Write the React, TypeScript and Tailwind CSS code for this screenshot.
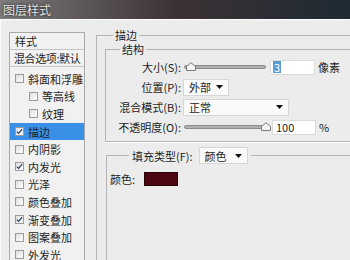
import React from 'react';

const font = { fontFamily: '"Noto Sans CJK SC", "Noto Sans", sans-serif' };

const items = [
  { label: '斜面和浮雕', checked: false, sub: false, active: false },
  { label: '等高线', checked: false, sub: true, active: false },
  { label: '纹理', checked: false, sub: true, active: false },
  { label: '描边', checked: true, sub: false, active: true },
  { label: '内阴影', checked: false, sub: false, active: false },
  { label: '内发光', checked: true, sub: false, active: false },
  { label: '光泽', checked: false, sub: false, active: false },
  { label: '颜色叠加', checked: false, sub: false, active: false },
  { label: '渐变叠加', checked: true, sub: false, active: false },
  { label: '图案叠加', checked: false, sub: false, active: false },
  { label: '外发光', checked: false, sub: false, active: false },
];

function Check({ checked }: { checked: boolean }) {
  return (
    <div className="w-[9px] h-[9px] border border-[#9a9a9a] bg-gradient-to-br from-[#dedede] to-white flex items-center justify-center shrink-0">
      {checked && (
        <svg width="7" height="7" viewBox="0 0 7 7">
          <path d="M0.8 3.6 L2.6 5.4 L6.2 1.2" fill="none" stroke="#2d3f66" strokeWidth="1.3" />
        </svg>
      )}
    </div>
  );
}

function Slider({ pos }: { pos: number }) {
  return (
    <div className="relative w-[82px] h-[20px] flex items-center">
      <div className="w-full h-[4px] bg-[#b0b0b0] border border-[#8c8c8c] rounded-[2px]" />
      <svg className="absolute top-[5px]" style={{ left: pos }} width="10" height="9" viewBox="0 0 10 9">
        <path d="M0.5 8.5 L0.5 4.5 L5 0.8 L9.5 4.5 L9.5 8.5 Z" fill="#f4f4f4" stroke="#7d7d7d" />
      </svg>
    </div>
  );
}

function Select({ text, w }: { text: string; w: string }) {
  return (
    <div className={`${w} h-[17px] bg-[#fafafa] border border-[#d6d6d6] flex items-center justify-between pl-[5px] pr-[5px]`}>
      <span>{text}</span>
      <svg width="7" height="4" viewBox="0 0 7 4">
        <path d="M0 0 L7 0 L3.5 4 Z" fill="#111" />
      </svg>
    </div>
  );
}

export default function App() {
  return (
    <div className="w-[350px] h-[260px] overflow-hidden bg-[#ececec] text-[11px] text-[#1e1e1e] leading-[14px]" style={font}>
      {/* Title bar */}
      <div className="h-[19px] bg-gradient-to-r from-[#7d7b7b] via-[#3c3236] to-[#1e2a33] flex items-center pl-[3px]">
        <span className="text-[12px] text-[#e6e6e6] [text-shadow:0_0_3px_#000]">图层样式</span>
      </div>

      <div className="flex h-[241px]">
        <div className="w-[2px] bg-[#a59d9d]" />
        <div className="flex-1 flex border-l border-t border-white">
          {/* Left list */}
          <div className="ml-[8px] mt-[12px] w-[76px] border border-[#a8a8a8] bg-[#f1f1f1] self-start">
            <div className="h-[17px] border-b border-[#c4c4c4] pl-[5px] flex items-center">样式</div>
            <div className="h-[17px] border-b border-[#c4c4c4] pl-[4px] flex items-center whitespace-nowrap tracking-[-0.4px]">混合选项:默认</div>
            <div className="pt-[3px]">
              {items.map((it) => (
                <div
                  key={it.label}
                  className={`h-[17.6px] flex items-center gap-[4px] ${it.sub ? 'pl-[19px]' : 'pl-[5px]'} ${it.active ? 'bg-[#3a8fe6]' : ''}`}
                >
                  <Check checked={it.checked} />
                  <span className="whitespace-nowrap">{it.label}</span>
                </div>
              ))}
            </div>
          </div>

          {/* Right panel */}
          <div className="ml-[11px] mt-[8px]">
            <fieldset className="w-[270px] h-[240px] border-l border-t border-[#b3b3b3]">
              <legend className="ml-[16px] px-[2px]">描边</legend>

              <fieldset className="ml-[8px] w-[258px] border border-[#b3b3b3] shadow-[0_1px_0_#fff]">
                <legend className="ml-[14px] px-[2px]">结构</legend>
                <div className="pt-[1px] pb-[4px]">
                  <div className="h-[20px] flex items-center">
                    <div className="w-[75px] text-right">大小(S):</div>
                    <div className="ml-[3px]"><Slider pos={2} /></div>
                    <div className="ml-[4px] w-[45px] h-[15px] bg-white border border-[#dadada] flex items-center pl-[2px]">
                      <span className="bg-[#5b9bd5] text-white px-[1px] leading-[12px]">3</span>
                    </div>
                    <span className="ml-[3px]">像素</span>
                  </div>
                  <div className="h-[20px] flex items-center">
                    <div className="w-[75px] text-right">位置(P):</div>
                    <div className="ml-[2px]"><Select text="外部" w="w-[46px]" /></div>
                  </div>
                  <div className="h-[20px] flex items-center">
                    <div className="w-[75px] text-right">混合模式(B):</div>
                    <div className="ml-[2px]"><Select text="正常" w="w-[106px]" /></div>
                  </div>
                  <div className="h-[20px] flex items-center">
                    <div className="w-[75px] text-right">不透明度(O):</div>
                    <div className="ml-[3px]"><Slider pos={77} /></div>
                    <div className="ml-[6px] w-[44px] h-[15px] bg-white border border-[#dadada] flex items-center pl-[3px]">
                      100
                    </div>
                    <span className="ml-[3px]">%</span>
                  </div>
                </div>
              </fieldset>

              <fieldset className="ml-[9px] mt-[5px] w-[258px] h-[120px] border-l border-t border-[#b3b3b3]">
                <legend className="ml-[22px] px-[3px]">
                  <div className="flex items-center">
                    <span>填充类型(F):</span>
                    <div className="ml-[6px]"><Select text="颜色" w="w-[49px]" /></div>
                  </div>
                </legend>
                <div className="pt-[8px] pl-[3px] flex items-center">
                  <span>颜色:</span>
                  <div className="ml-[9px] w-[34px] h-[14px] bg-[#4a0710] border border-[#2a0208]" />
                </div>
              </fieldset>
            </fieldset>
          </div>
        </div>
      </div>
    </div>
  );
}
